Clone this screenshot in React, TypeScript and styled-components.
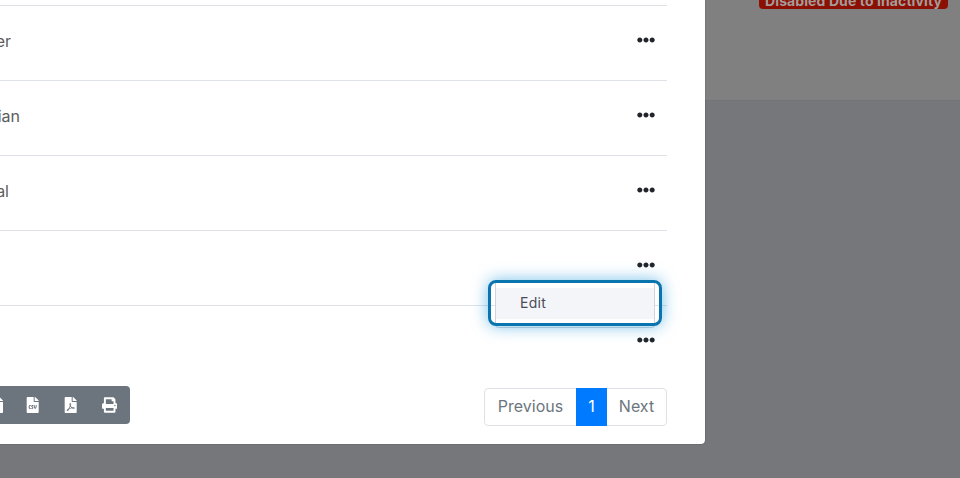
import React from "react";
import styled, { createGlobalStyle } from "styled-components";
import { FaEllipsisH, FaFileCsv, FaFileExcel, FaFilePdf, FaPrint } from "react-icons/fa";

const GlobalStyle = createGlobalStyle`
  html, body {
    margin: 0;
    padding: 0;
    background: #76777b;
  }
  body {
    font-family: "Inter", "Liberation Sans", sans-serif;
  }
`;

const Page = styled.div`
  position: relative;
  width: 960px;
  height: 478px;
  overflow: hidden;
  background: #76777b;
`;

const Band = styled.div`
  height: 101px;
  background: #808080;
  border-bottom: 1px solid #737478;
  box-sizing: border-box;
  display: flex;
  justify-content: flex-end;
  align-items: flex-start;
  padding-right: 12px;
`;

const Badge = styled.div`
  width: 189px;
  height: 9px;
  background: #8c0f04;
  border-radius: 0 0 4px 4px;
  color: #a39c99;
  font-size: 14px;
  font-weight: 700;
  letter-spacing: 0.1px;
  line-height: 14px;
  display: flex;
  align-items: flex-end;
  justify-content: center;
  overflow: hidden;
  white-space: nowrap;

  span {
    margin-bottom: 1px;
  }
`;

const Modal = styled.div`
  position: absolute;
  left: 0;
  top: 0;
  width: 705px;
  height: 444px;
  box-sizing: border-box;
  padding: 5px 38px 0 0;
  background: #fff;
  border-radius: 0 0 4px 0;
  box-shadow: 0 0 1px rgba(0, 0, 0, 0.8);
`;

const Row = styled.div`
  height: 75px;
  box-sizing: border-box;
  border-top: 1px solid #dee2e6;
  display: flex;
  align-items: center;
  justify-content: space-between;
  padding: 0 12px 6px 0;
  font-size: 16px;
  color: #5c5c5c;
`;

const Name = styled.div<{ $width: number }>`
  width: ${(p) => p.$width}px;
  margin-top: 2px;
  overflow: hidden;
  display: flex;
  justify-content: flex-end;
  white-space: nowrap;
`;

const Dots = styled(FaEllipsisH)`
  width: 18px;
  height: 18px;
  color: #212529;
`;

const Footer = styled.div`
  display: flex;
  justify-content: space-between;
  align-items: flex-start;
  margin-top: 6px;
`;

const Tools = styled.div`
  width: 130px;
  height: 38px;
  background: #6c757d;
  border-radius: 0 4px 4px 0;
  display: flex;
  align-items: center;
  justify-content: flex-end;
  gap: 23px;
  padding-right: 13px;
  box-sizing: border-box;
  color: #fff;
  font-size: 16px;
`;

const ClippedIcon = styled.span`
  width: 3px;
  overflow: hidden;
  display: flex;
  justify-content: flex-end;
  margin-right: -1px;

  svg {
    flex-shrink: 0;
    margin-right: -2px;
  }
`;

const Pager = styled.div`
  display: flex;
  height: 38px;
  margin-top: 2px;
  box-sizing: border-box;
  border: 1px solid #dee2e6;
  border-radius: 4px;
  font-size: 16px;
  color: #6c757d;
`;

const PageLink = styled.div<{ $active?: boolean; $width: number }>`
  width: ${(p) => p.$width}px;
  margin: ${(p) => (p.$active ? "-1px 0" : "0")};
  padding-bottom: 2px;
  box-sizing: border-box;
  display: flex;
  align-items: center;
  justify-content: center;
  background: ${(p) => (p.$active ? "#007bff" : "transparent")};
  color: ${(p) => (p.$active ? "#fff" : "inherit")};
`;

const Menu = styled.div`
  position: absolute;
  left: 495px;
  top: 281px;
  width: 160px;
  height: 47px;
  box-sizing: border-box;
  padding: 7px 0 0;
  background: #fff;
  border: 1px solid #d2d3d6;
  border-top: 0;
  border-radius: 0 0 4px 4px;
`;

const MenuItem = styled.div`
  height: 31px;
  background: #f4f5f9;
  padding: 0 0 2px 24px;
  box-sizing: border-box;
  display: flex;
  align-items: center;
  font-size: 14px;
  letter-spacing: 0.3px;
  color: #4a4b57;
`;

const FocusRing = styled.div`
  position: absolute;
  left: 488px;
  top: 280px;
  width: 174px;
  height: 46px;
  box-sizing: border-box;
  border: 3px solid #0a74ae;
  border-radius: 8px;
  box-shadow: 0 0 16px rgba(30, 150, 220, 0.6);
`;

const rows = [
  { name: "Manager", width: 11 },
  { name: "Christian", width: 20 },
  { name: "Neal", width: 9 },
  { name: "", width: 0 },
  { name: "", width: 0 },
];

export default function App() {
  return (
    <Page>
      <GlobalStyle />
      <Band>
        <Badge>
          <span>Disabled Due to Inactivity</span>
        </Badge>
      </Band>
      <Modal>
        {rows.map((row, i) => (
          <Row key={i}>
            <Name $width={row.width}>{row.name}</Name>
            <Dots />
          </Row>
        ))}
        <Footer>
          <Tools>
            <ClippedIcon>
              <FaFileExcel />
            </ClippedIcon>
            <FaFileCsv />
            <FaFilePdf />
            <FaPrint />
          </Tools>
          <Pager>
            <PageLink $width={91}>Previous</PageLink>
            <PageLink $width={31} $active>1</PageLink>
            <PageLink $width={59}>Next</PageLink>
          </Pager>
        </Footer>
      </Modal>
      <Menu>
        <MenuItem>Edit</MenuItem>
      </Menu>
      <FocusRing />
    </Page>
  );
}
